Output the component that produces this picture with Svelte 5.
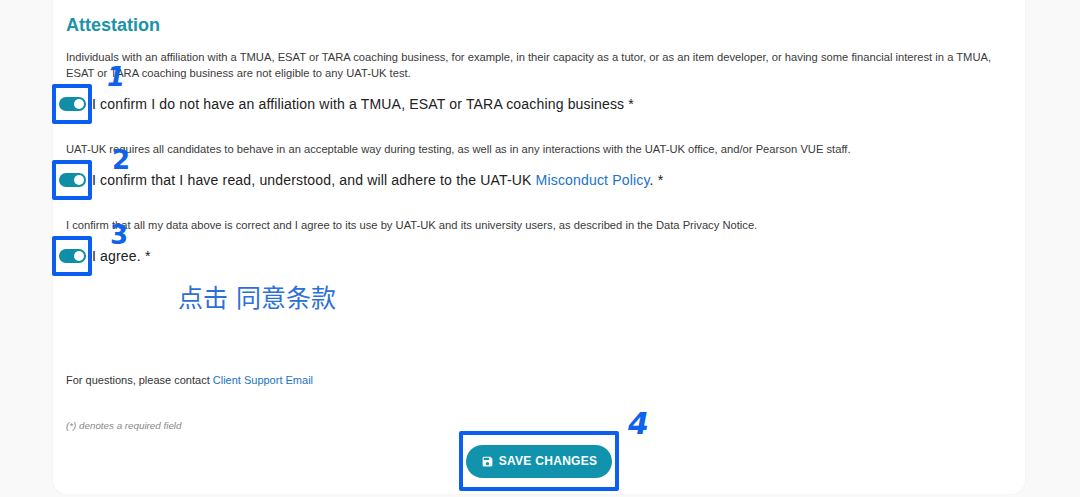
<script lang="ts">
	const rows = [
		{
			id: 1,
			note: 'Individuals with an affiliation with a TMUA, ESAT or TARA coaching business, for example, in their capacity as a tutor, or as an item developer, or having some financial interest in a TMUA, ESAT or TARA coaching business are not eligible to any UAT-UK test.',
			label: 'I confirm I do not have an affiliation with a TMUA, ESAT or TARA coaching business *'
		},
		{
			id: 2,
			note: 'UAT-UK requires all candidates to behave in an acceptable way during testing, as well as in any interactions with the UAT-UK office, and/or Pearson VUE staff.',
			label: 'I confirm that I have read, understood, and will adhere to the UAT-UK ',
			link: 'Misconduct Policy',
			after: '. *'
		},
		{
			id: 3,
			note: 'I confirm that all my data above is correct and I agree to its use by UAT-UK and its university users, as described in the Data Privacy Notice.',
			label: 'I agree. *'
		}
	];
</script>

<div class="page">
	<main class="card">
		<h2>Attestation</h2>

		{#each rows as row}
			<section class="block">
				<p class="note">{row.note}</p>
				<div class="row">
					<span class="mark">
						<span class="toggle"><span class="knob"></span></span>
						<span class="num num-{row.id}">{row.id}</span>
					</span>
					<span class="label">{row.label}{#if row.link}<a href="#policy">{row.link}</a>{row.after}{/if}</span>
				</div>
			</section>
		{/each}

		<p class="hint">点击 同意条款</p>

		<p class="contact">For questions, please contact <a href="#mail">Client Support Email</a></p>
		<p class="required">(*) denotes a required field</p>

		<div class="actions">
			<span class="save-mark">
				<button class="save">
					<svg viewBox="0 0 24 24" width="13" height="13" aria-hidden="true">
						<path fill="currentColor" d="M17 3H5a2 2 0 0 0-2 2v14a2 2 0 0 0 2 2h14a2 2 0 0 0 2-2V7l-4-4zm-5 16a3 3 0 1 1 0-6 3 3 0 0 1 0 6zm3-10H5V5h10v4z" />
					</svg>
					SAVE CHANGES
				</button>
				<span class="num num-4">4</span>
			</span>
		</div>
	</main>
</div>

<style>
	:global(body) {
		margin: 0;
		background: #f9f9f9;
	}

	.page {
		width: 1080px;
		height: 497px;
		overflow: hidden;
		padding: 0 55px 3px 53px;
		box-sizing: border-box;
		font-family: "Liberation Sans", Arial, sans-serif;
		color: #333;
	}

	.card {
		height: 494px;
		box-sizing: border-box;
		background: #fff;
		border-radius: 0 0 14px 14px;
		padding: 14px 30px 0 13px;
		box-shadow: 0 0 3px rgba(0, 0, 0, 0.05);
	}

	h2 {
		margin: 0 0 13px;
		font-size: 18px;
		line-height: 22px;
		font-weight: 700;
		color: #1b93a8;
	}

	.block {
		margin-bottom: 17px;
	}

	.note {
		margin: 0;
		font-size: 11.2px;
		line-height: 16px;
		color: #3a3a3a;
	}

	.row {
		display: flex;
		align-items: center;
		height: 40px;
		margin-top: 3px;
		margin-left: -14px;
	}

	.mark {
		position: relative;
		flex: none;
		display: flex;
		align-items: center;
		justify-content: center;
		width: 40px;
		height: 40px;
		box-sizing: border-box;
		border: 4px solid #0a5ff0;
		border-radius: 2px;
	}

	.toggle {
		display: block;
		width: 27px;
		height: 14px;
		border-radius: 7px;
		background: #0f8ea6;
		position: relative;
	}

	.knob {
		position: absolute;
		right: 2px;
		top: 2px;
		width: 10px;
		height: 10px;
		border-radius: 50%;
		background: #fff;
	}

	.num {
		position: absolute;
		font-family: "DejaVu Sans", sans-serif;
		font-weight: 700;
		color: #0f62ea;
		font-size: 26px;
		line-height: 24px;
	}

	.num-1 {
		left: 51px;
		top: -23px;
		font-style: italic;
	}

	.num-2 {
		left: 56px;
		top: -16px;
	}

	.num-3 {
		left: 54px;
		top: -17px;
	}

	.num-4 {
		left: 165px;
		top: -26px;
		font-size: 30px;
		line-height: 30px;
		font-style: italic;
	}

	.label {
		font-size: 14.05px;
		color: #222;
		white-space: nowrap;
		letter-spacing: 0.15px;
	}

	a {
		color: #2272c9;
		text-decoration: none;
	}

	.hint {
		margin: -13px 0 0 112px;
		font-family: "Noto Sans CJK SC", sans-serif;
		font-size: 25px;
		line-height: 32px;
		word-spacing: 2.4px;
		color: #2c6fd8;
	}

	.contact {
		margin: 60px 0 0;
		font-size: 11px;
		line-height: 16px;
		color: #333;
	}

	.required {
		margin: 31px 0 0;
		font-size: 9.8px;
		line-height: 14px;
		font-style: italic;
		color: #888;
	}

	.actions {
		display: flex;
		justify-content: center;
		margin-top: -2px;
		padding-left: 17px;
	}

	.save-mark {
		position: relative;
		display: flex;
		align-items: center;
		justify-content: center;
		width: 160px;
		height: 60px;
		box-sizing: border-box;
		border: 4px solid #0a5ff0;
		border-radius: 2px;
	}

	.save {
		display: flex;
		align-items: center;
		justify-content: center;
		gap: 5px;
		width: 146px;
		height: 33px;
		border: 0;
		border-radius: 17px;
		background: #1193ad;
		color: #fff;
		font-family: inherit;
		font-size: 12px;
		font-weight: 700;
		letter-spacing: 0.3px;
		padding: 0;
	}
</style>
